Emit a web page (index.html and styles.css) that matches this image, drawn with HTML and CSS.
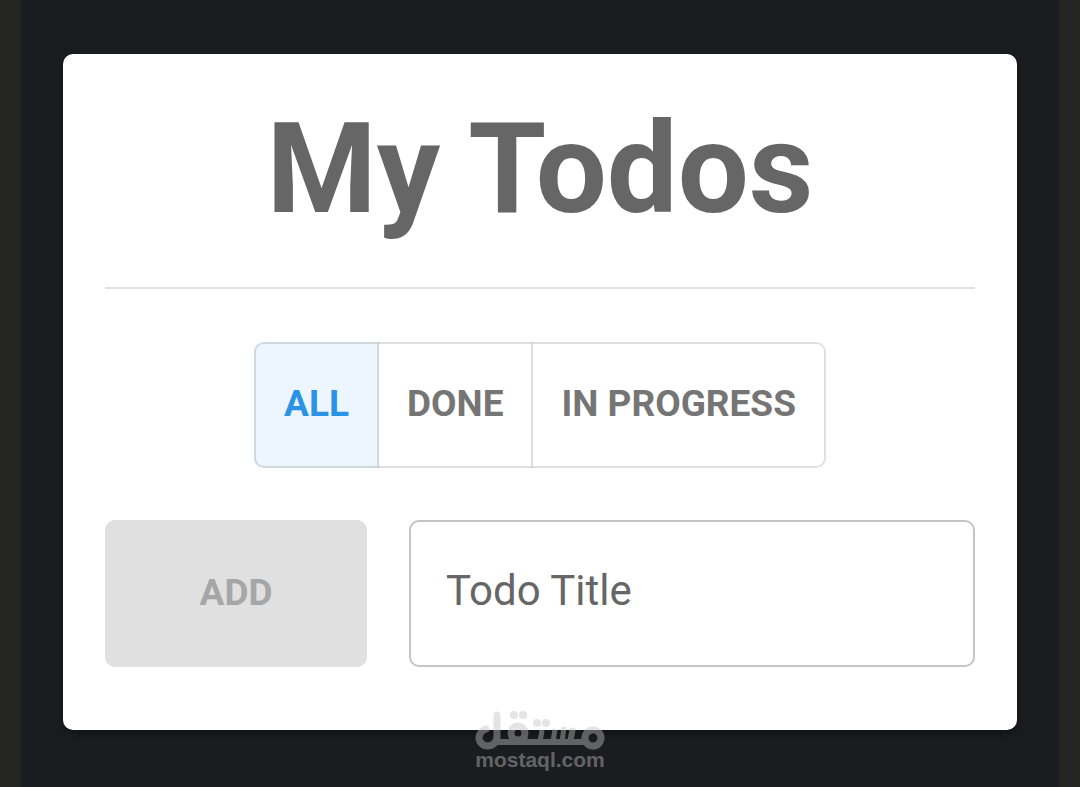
FILE: index.html
```html
<!DOCTYPE html>
<html lang="en">

<head>
    <meta charset="UTF-8">
    <meta name="viewport" content="width=device-width, initial-scale=1">
    <title>My Todos</title>
    <link rel="stylesheet" href="styles.css">
</head>

<body>
    <main class="page">
        <div class="card">
            <h1 class="title">My Todos</h1>
            <hr class="divider">

            <div class="filters" role="group" aria-label="Filter">
                <button type="button" class="filter active" aria-pressed="true">ALL</button>
                <button type="button" class="filter" aria-pressed="false">DONE</button>
                <button type="button" class="filter" aria-pressed="false">IN PROGRESS</button>
            </div>

            <form class="add-form">
                <button type="submit" class="btn-add" disabled>ADD</button>
                <input type="text" class="todo-input" placeholder="Todo Title" aria-label="Todo Title">
            </form>

            <div class="watermark">
                <svg class="watermark-logo" viewBox="0 0 130 39" aria-hidden="true">
                    <g fill="none" stroke="currentColor" stroke-width="7">
                        <path d="M11 18C7 19 4 23 4 27C4 31 8 35 12 35C18 35 22 31 22 26V4" stroke-linecap="round" />
                        <circle cx="43" cy="22" r="7" />
                        <circle cx="118" cy="27" r="8" />
                        <path d="M18 31H113" stroke-width="6" />
                        <path d="M48 25L52 31M67 19L65 31M80 18L78 31M89 16L87 31" stroke-width="5" />
                        <path d="M98 17L95 31" stroke-width="6" />
                    </g>
                    <g fill="currentColor">
                        <circle cx="39" cy="4" r="4" />
                        <circle cx="48" cy="4" r="4" />
                        <circle cx="62" cy="12" r="4" />
                        <circle cx="71" cy="12" r="4" />
                    </g>
                </svg>
                <span class="watermark-text">mostaql.com</span>
            </div>
        </div>
    </main>
</body>

</html>
```

FILE: styles.css
```css
* {
    margin: 0;
    padding: 0;
    box-sizing: border-box;
}

body {
    font-family: Roboto, "Liberation Sans", sans-serif;
    background: #252523;
    padding: 0 21px;
}

.page {
    background: #1b1c20;
    min-height: 100vh;
    padding: 54px 42px;
}

.card {
    position: relative;
    background: #fff;
    border-radius: 10px;
    padding: 42px 42px 63px;
    box-shadow: 0 3px 8px rgba(0, 0, 0, 0.4);
}

.title {
    color: #666;
    font-size: 126px;
    font-weight: 700;
    line-height: 147px;
    text-align: center;
}

.divider {
    border: none;
    height: 2px;
    background: #e0e0e0;
    margin: 44px 0 53px;
}

.filters {
    display: flex;
    justify-content: center;
    margin-bottom: 52px;
}

.filter {
    font-family: inherit;
    font-size: 37px;
    font-weight: 700;
    line-height: 64px;
    color: #757575;
    background: transparent;
    background-clip: padding-box;
    border: 2px solid rgba(0, 0, 0, 0.12);
    padding: 28px 28px 30px;
    cursor: pointer;
}

.filter + .filter {
    border-left-color: transparent;
    margin-left: -2px;
}

.filter:first-child {
    border-radius: 10px 0 0 10px;
}

.filter:last-child {
    border-radius: 0 10px 10px 0;
}

.filter.active {
    color: #2b93e6;
    background: #edf6fe;
}

.add-form {
    display: grid;
    grid-template-columns: repeat(3, 1fr);
    gap: 42px;
}

.btn-add {
    font-family: inherit;
    font-size: 37px;
    font-weight: 700;
    color: #a6a6a6;
    background: #e0e0e0;
    border: none;
    border-radius: 10px;
    padding-bottom: 2px;
}

.todo-input {
    grid-column: span 2;
    width: 100%;
    height: 147px;
    font-family: inherit;
    font-size: 42px;
    color: #333;
    background: #fff;
    border: 2px solid #c4c4c4;
    border-radius: 10px;
    padding: 0 35px 6px;
}

.todo-input::placeholder {
    color: #666;
    opacity: 1;
}

.watermark {
    position: absolute;
    left: 50%;
    bottom: -40px;
    transform: translateX(-50%);
    display: flex;
    flex-direction: column;
    align-items: center;
    color: #c1c1c1;
    opacity: 0.43;
    pointer-events: none;
}

.watermark-logo {
    width: 130px;
    height: 39px;
}

.watermark-text {
    font-family: "Liberation Sans", Arial, sans-serif;
    font-size: 21px;
    font-weight: 700;
    line-height: 20px;
}
```
